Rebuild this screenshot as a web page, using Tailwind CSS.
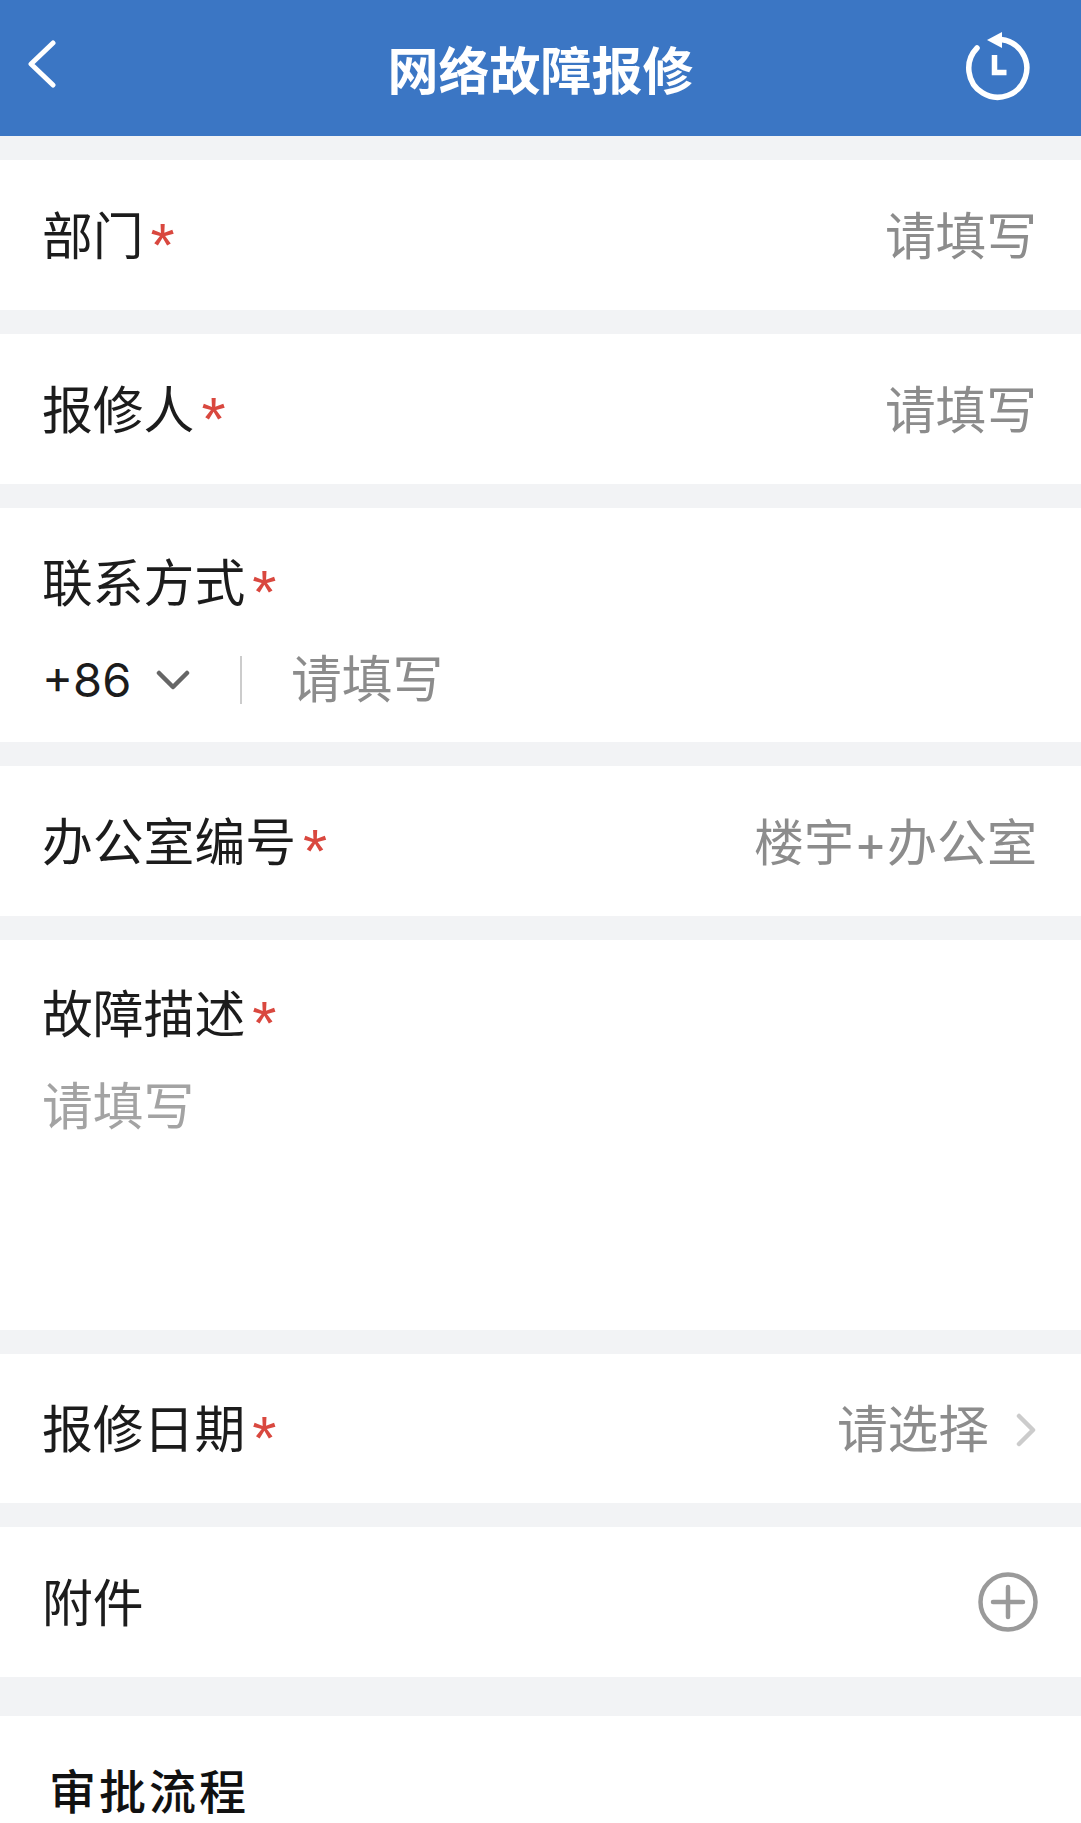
<!DOCTYPE html>
<html lang="zh-CN">
<head>
  <meta charset="UTF-8">
  <meta name="viewport" content="width=device-width, initial-scale=1.0">
  <title>网络故障报修</title>
  <script src="https://cdn.jsdelivr.net/npm/@tailwindcss/browser@4"></script>
</head>
<body class="bg-white font-['Inter','Noto_Sans_CJK_SC',sans-serif] text-[50.7px] leading-[60px] text-[#1c1c1c]">
  <div class="h-[1823px] overflow-hidden bg-[#f2f3f5]">

    <!-- 顶部标题 -->
    <header class="grid h-[136px] grid-cols-[1fr_auto_1fr] items-center bg-[#3b76c4] px-[28px] text-white">
      <svg class="mb-[8px] h-[48px] w-[28px]" viewBox="0 0 28 48" fill="none" stroke="currentColor" stroke-width="5" stroke-linecap="round" stroke-linejoin="round">
        <path d="M25 3 3 24l22 21" />
      </svg>
      <h1 class="mt-[7px] text-[51px] font-bold">网络故障报修</h1>
      <svg class="ml-auto mr-[18px] h-[76px] w-[76px]" viewBox="0 0 76 76" fill="none" stroke="currentColor">
        <path d="M18 18A29 29 0 1 0 42 9.4" stroke-width="5.5" stroke-linecap="round" />
        <path d="M28 10 43 2v16z" fill="currentColor" stroke="none" />
        <path d="M35.5 25v17.5h12" stroke-width="5.5" />
      </svg>
    </header>

    <main class="flex flex-col gap-[24px] pt-[24px]">
      <!-- 部门 -->
      <div class="flex h-[150px] items-center justify-between bg-white pl-[42px] pr-[44px] pt-[3px]">
        <label class="flex items-center text-[50.8px]">部门<span class="ml-[7px] font-['Liberation_Sans'] text-[62px] text-[#d9483f] translate-y-[8px]">*</span></label>
        <span class="text-[#8c8c8c]">请填写</span>
      </div>

      <!-- 报修人 -->
      <div class="flex h-[150px] items-center justify-between bg-white pl-[42px] pr-[44px] pt-[3px]">
        <label class="flex items-center text-[50.8px]">报修人<span class="ml-[7px] font-['Liberation_Sans'] text-[62px] text-[#d9483f] translate-y-[8px]">*</span></label>
        <span class="text-[#8c8c8c]">请填写</span>
      </div>

      <!-- 联系方式 -->
      <div class="h-[234px] bg-white pl-[42px] pr-[44px] pt-[46px]">
        <label class="flex items-center text-[50.8px]">联系方式<span class="ml-[7px] font-['Liberation_Sans'] text-[62px] text-[#d9483f] translate-y-[8px]">*</span></label>
        <div class="mt-[36px] flex items-center">
          <span class="w-[114px] text-[47px]">+86</span>
          <svg class="h-[20px] w-[34px]" viewBox="0 0 34 20" fill="none" stroke="#666" stroke-width="4.5" stroke-linecap="round" stroke-linejoin="round">
            <path d="M3 3l14 14L31 3" />
          </svg>
          <div class="ml-[50px] h-[48px] w-[2px] bg-[#cccccc]"></div>
          <span class="ml-[49px] text-[#8c8c8c]">请填写</span>
        </div>
      </div>

      <!-- 办公室编号 -->
      <div class="flex h-[150px] items-center justify-between bg-white pl-[42px] pr-[44px] pt-[3px]">
        <label class="flex items-center text-[50.8px]">办公室编号<span class="ml-[7px] font-['Liberation_Sans'] text-[62px] text-[#d9483f] translate-y-[8px]">*</span></label>
        <span class="text-[50px] text-[#8c8c8c]">楼宇+办公室</span>
      </div>

      <!-- 故障描述 -->
      <div class="h-[390px] bg-white pl-[42px] pr-[44px] pt-[45px]">
        <label class="flex items-center text-[50.8px]">故障描述<span class="ml-[7px] font-['Liberation_Sans'] text-[62px] text-[#d9483f] translate-y-[8px]">*</span></label>
        <div class="mt-[32px] text-[#a3a3a3]">请填写</div>
      </div>

      <!-- 报修日期 -->
      <div class="flex h-[149px] items-center justify-between bg-white pl-[42px] pr-[45px] pt-[3px]">
        <label class="flex items-center text-[50.8px]">报修日期<span class="ml-[7px] font-['Liberation_Sans'] text-[62px] text-[#d9483f] translate-y-[8px]">*</span></label>
        <div class="flex items-center gap-[27px]">
          <span class="text-[#8c8c8c]">请选择</span>
          <svg class="h-[34px] w-[20px]" viewBox="0 0 20 34" fill="none" stroke="#cccccc" stroke-width="4.5" stroke-linecap="round" stroke-linejoin="round">
            <path d="M3 3l14 14L3 31" />
          </svg>
        </div>
      </div>

      <!-- 附件 -->
      <div class="flex h-[150px] items-center justify-between bg-white pl-[42px] pr-[43px]">
        <label class="pt-[3px] text-[50.8px]">附件</label>
        <svg class="h-[60px] w-[60px]" viewBox="0 0 60 60" fill="none" stroke="#9a9a9a" stroke-width="4.5" stroke-linecap="round">
          <circle cx="30" cy="30" r="27.5" />
          <path d="M15 30h30M30 15v30" />
        </svg>
      </div>

      <!-- 审批流程 -->
      <section class="mt-[15px] h-[200px] bg-white pl-[49px] pt-[46px]">
        <h2 class="text-[47px] font-medium tracking-[3px] text-[#111111]">审批流程</h2>
      </section>
    </main>
  </div>
</body>
</html>
